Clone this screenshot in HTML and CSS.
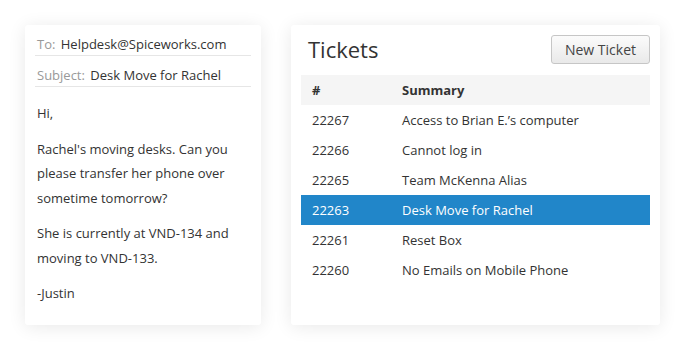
FILE: index.html
```html
<!DOCTYPE html>
<html lang="en">
<head>
    <meta charset="UTF-8">
    <title>Helpdesk Tickets</title>
    <link rel="stylesheet" href="styles.css">
</head>
<body>
    <div class="wrap">
        <!-- Email -->
        <div class="card email">
            <div class="field"><span class="label">To:</span> Helpdesk@Spiceworks.com</div>
            <div class="field"><span class="label">Subject:</span> Desk Move for Rachel</div>
            <div class="body">
                <p>Hi,</p>
                <p>Rachel's moving desks. Can you please transfer her phone over sometime tomorrow?</p>
                <p>She is currently at VND-134 and moving to VND-133.</p>
                <p>-Justin</p>
            </div>
        </div>

        <!-- Tickets -->
        <div class="card tickets">
            <div class="top">
                <h2>Tickets</h2>
                <button>New Ticket</button>
            </div>
            <table>
                <colgroup><col class="num-col"><col></colgroup>
                <thead>
                    <tr><th>#</th><th>Summary</th></tr>
                </thead>
                <tbody>
                    <tr><td>22267</td><td>Access to Brian E.’s computer</td></tr>
                    <tr><td>22266</td><td>Cannot log in</td></tr>
                    <tr><td>22265</td><td>Team McKenna Alias</td></tr>
                    <tr class="active"><td>22263</td><td>Desk Move for Rachel</td></tr>
                    <tr><td>22261</td><td>Reset Box</td></tr>
                    <tr><td>22260</td><td>No Emails on Mobile Phone</td></tr>
                </tbody>
            </table>
        </div>
    </div>
</body>
</html>
```

FILE: styles.css
```css
body {
    margin: 0;
    font-family: "Open Sans", Arial, sans-serif;
    color: #333;
    background: #fff;
}
.wrap {
    display: flex;
    gap: 30px;
    padding: 25px;
}
.card {
    background: #fff;
    border-radius: 3px;
    box-shadow: 0 2px 18px rgba(0, 0, 0, 0.09);
    height: 300px;
    box-sizing: border-box;
}
/* Email card */
.email {
    width: 236px;
    padding: 0 10px;
}
.field {
    font-size: 13px;
    line-height: 22px;
    height: 22px;
    padding: 8px 0 0 2px;
    border-bottom: 1px solid #e6e6e6;
}
.label {
    color: #999;
    margin-right: 2px;
}
.body {
    padding: 3px 2px 0 2px;
    font-size: 13px;
    line-height: 24.5px;
}
.body p {
    margin: 11px 0 0;
}
/* Tickets card */
.tickets {
    width: 369px;
    padding: 10px;
}
.top {
    display: flex;
    justify-content: space-between;
    align-items: center;
    height: 29px;
    margin-bottom: 11px;
}
h2 {
    margin: 0 0 0 7px;
    font-size: 22px;
    line-height: 29px;
    font-weight: 400;
    color: #333;
}
button {
    width: 99px;
    height: 29px;
    font-family: inherit;
    font-size: 14px;
    color: #444;
    background: linear-gradient(#fbfbfb, #e9e9e9);
    border: 1px solid #c6c6c6;
    border-radius: 3px;
    padding: 0;
}
table {
    width: 100%;
    table-layout: fixed;
    border-collapse: collapse;
    font-size: 13px;
}
.num-col {
    width: 90px;
}
th, td {
    height: 30px;
    padding: 0 0 0 11px;
    text-align: left;
}
th {
    background: #f5f5f5;
    font-weight: 700;
}
tr.active td {
    background: #2186c9;
    color: #fff;
}
```
